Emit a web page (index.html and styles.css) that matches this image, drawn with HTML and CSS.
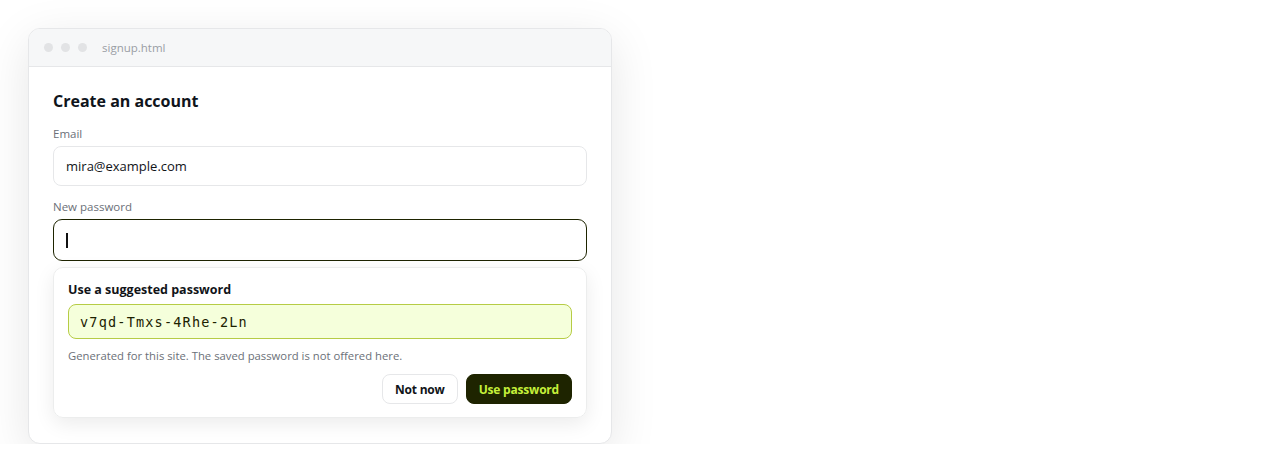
FILE: index.html
```html
<!DOCTYPE html>
<html>
<head>
<meta charset="utf-8">
<link rel="stylesheet" href="styles.css">
</head>
<body>
<div class="window">
  <div class="titlebar">
    <span class="dot"></span><span class="dot"></span><span class="dot"></span>
    <span class="tab">signup.html</span>
  </div>
  <div class="content">
    <h1 class="heading">Create an account</h1>
    <label class="label">Email</label>
    <div class="input">mira@example.com</div>
    <label class="label label-pw">New password</label>
    <div class="input input-focus"><span class="caret"></span></div>
    <div class="popover">
      <div class="pop-title">Use a suggested password</div>
      <div class="suggest">v7qd-Tmxs-4Rhe-2Ln</div>
      <div class="hint">Generated for this site. The saved password is not offered here.</div>
      <div class="actions">
        <button class="btn btn-ghost">Not now</button>
        <button class="btn btn-primary">Use password</button>
      </div>
    </div>
  </div>
</div>
</body>
</html>
```
FILE: styles.css
```css
* { box-sizing: border-box; }
html, body { margin: 0; background: #ffffff; }
body {
  padding: 28px 0 0 28px;
  font-family: "Open Sans", "Noto Sans", "Liberation Sans", sans-serif;
  color: #111418;
}
.window {
  width: 584px;
  height: 416px;
  background: #ffffff;
  border: 1px solid #e6e7e9;
  border-radius: 12px;
  box-shadow: 0 12px 48px rgba(0,0,0,0.10);
  overflow: hidden;
}
.titlebar {
  height: 38px;
  background: #f6f7f8;
  border-bottom: 1px solid #e6e7e9;
  display: flex;
  align-items: center;
  padding-left: 15px;
  gap: 8px;
}
.dot {
  width: 9px; height: 9px; border-radius: 50%;
  background: #e2e3e5;
}
.tab {
  margin-left: 7px;
  font-size: 11.5px;
  color: #9a9ea5;
}
.content {
  padding: 23px 24px 0 24px;
  display: flex;
  flex-direction: column;
}
.heading {
  margin: 0 0 14px 0;
  font-size: 16px;
  font-weight: 700;
  line-height: 22px;
  color: #0f141b;
}
.label {
  font-size: 11.5px;
  color: #6b7078;
  line-height: 16px;
  margin-bottom: 4px;
}
.label-pw { margin-top: 13px; }
.input {
  height: 40px;
  border: 1px solid #e6e7e9;
  border-radius: 8px;
  padding: 0 12px;
  display: flex;
  align-items: center;
  font-size: 13px;
  color: #111418;
}
.input-focus {
  height: 42px;
  border: 1px solid #1e2400;
  border-radius: 9px;
}
.caret {
  width: 1.5px; height: 15px; background: #111;
}
.popover {
  margin-top: 6px;
  border: 1px solid #eceded;
  border-radius: 10px;
  box-shadow: 0 6px 20px rgba(0,0,0,0.08);
  padding: 13px 14px 13px 14px;
  display: flex;
  flex-direction: column;
  height: 151px;
}
.pop-title {
  font-size: 12.5px;
  font-weight: 700;
  line-height: 17px;
  margin-bottom: 6px;
  color: #111418;
}
.suggest {
  height: 35px;
  background: #f5ffdb;
  border: 1px solid #b6cc45;
  border-radius: 8px;
  padding: 0 11px;
  display: flex;
  align-items: center;
  font-family: "DejaVu Sans Mono", "Liberation Mono", monospace;
  font-size: 13.5px;
  letter-spacing: 1.2px;
  color: #1c2100;
}
.hint {
  margin-top: 9px;
  font-size: 11.3px;
  line-height: 16px;
  color: #6b7078;
}
.actions {
  margin-top: auto;
  display: flex;
  justify-content: flex-end;
  gap: 8px;
}
.btn {
  height: 30px;
  border-radius: 8px;
  font-family: inherit;
  font-size: 12px;
  font-weight: 700;
  letter-spacing: -0.2px;
  padding: 0 12px;
  cursor: pointer;
}
.btn-ghost {
  background: #ffffff;
  border: 1px solid #e6e7e9;
  color: #111418;
}
.btn-primary {
  background: #1e2400;
  border: 1px solid #1e2400;
  color: #c5f03a;
}
```
